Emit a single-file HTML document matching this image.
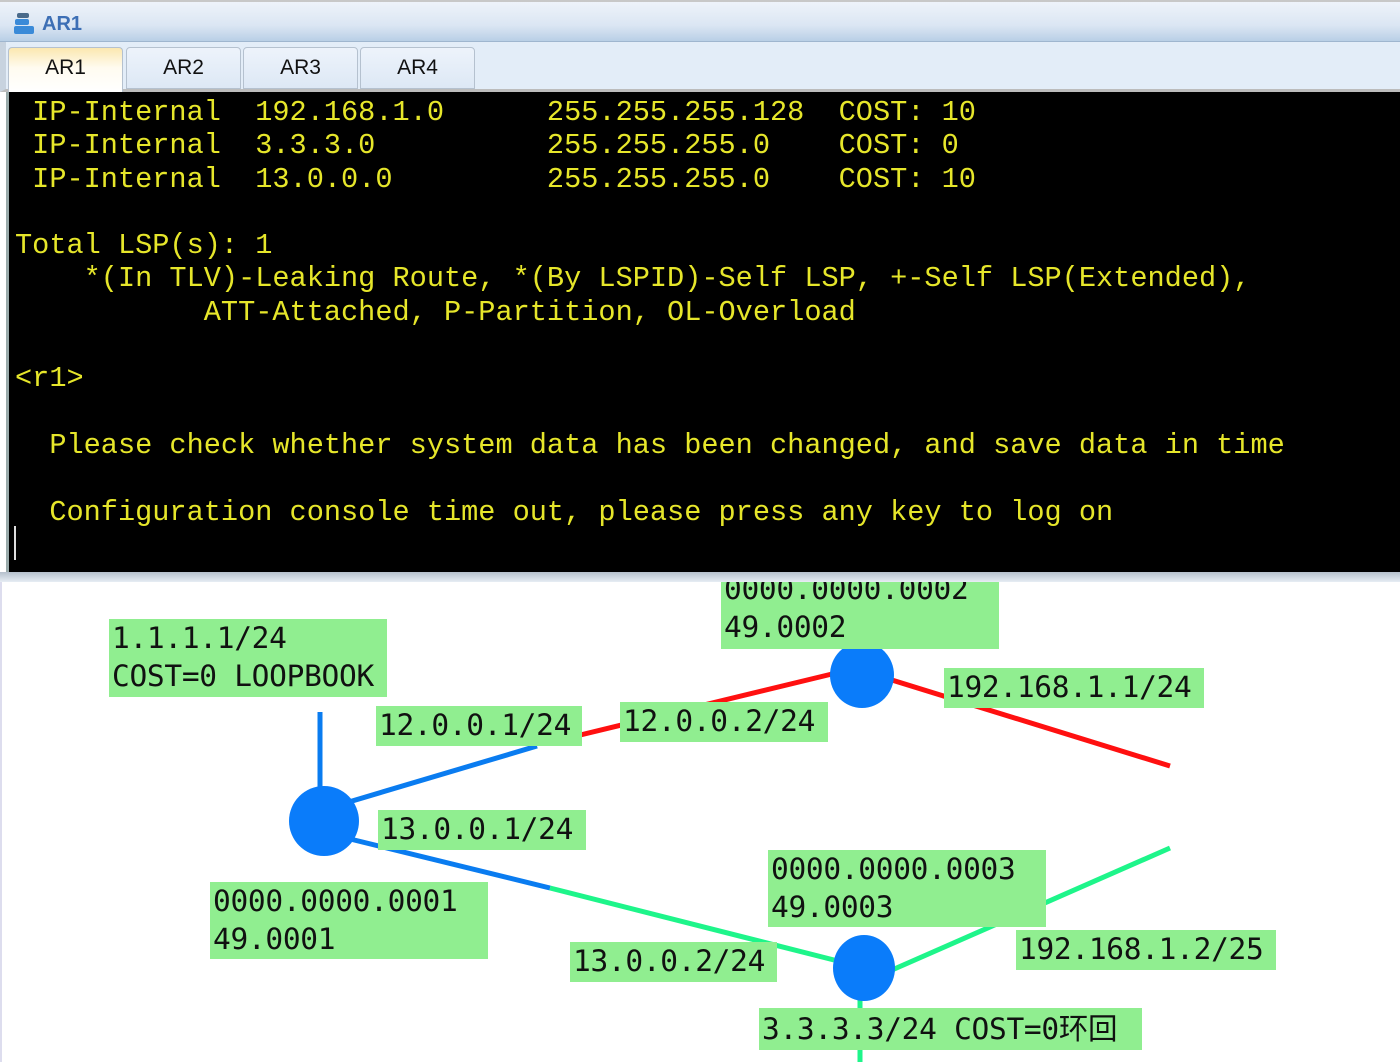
<!DOCTYPE html>
<html><head><meta charset="utf-8"><style>
*{margin:0;padding:0;box-sizing:border-box}
body{width:1400px;height:1062px;overflow:hidden;background:#fff;position:relative;font-family:"Liberation Sans",sans-serif}
#title{position:absolute;left:0;top:0;width:1400px;height:42px;border-top:2px solid #c8c8c8;background:linear-gradient(#eef3fa,#dbe6f3 60%,#b9cfe6);border-bottom:1px solid #9fb6cf}
#title span{position:absolute;left:42px;top:11px;font-size:20px;font-weight:bold;color:#3d6fb5}
#tabs{position:absolute;left:0;top:42px;width:1400px;height:50px;background:#e3edf8;border-left:6px solid #c8d3df;border-bottom:3px solid #bcbcbc}
.tab{position:absolute;top:5px;height:42px;width:115px;border:1px solid #b5c1cf;border-radius:4px 4px 0 0;background:linear-gradient(#edf3fb,#dde8f5);font-size:21px;text-align:center;line-height:40px;color:#111}
#term{position:absolute;left:6px;top:92px;width:1394px;height:482px;background:#000;border-left:3px solid #9aa;overflow:hidden}
#term pre{position:absolute;left:6px;top:4px;font-family:"Liberation Mono",monospace;font-size:28.6px;line-height:33.3px;color:#e6e62a}
#cursor{position:absolute;left:5px;top:434px;width:2px;height:34px;background:#ddd}
#band{position:absolute;left:0;top:572px;width:1400px;height:10px;background:linear-gradient(#b5c0cc,#e6edf4);}
#draw{position:absolute;left:0;top:582px;width:1400px;height:480px;overflow:hidden;border-left:2px solid #dde}
.l{position:absolute;background:#90ee90;font-family:"DejaVu Sans Mono","Noto Sans CJK SC",monospace;font-size:29.5px;line-height:38px;color:#111;padding:0 3px;white-space:pre;overflow:hidden;letter-spacing:-0.3px}
</style></head><body>
<div id="title"><svg style="position:absolute;left:12px;top:9px" width="26" height="26" viewBox="0 0 26 26"><rect x="5" y="2" width="12" height="5" rx="2" fill="#4a6a8a"/><rect x="3" y="8" width="14" height="6" rx="2" fill="#3a8ad8"/><rect x="2" y="15" width="20" height="8" rx="2" fill="#3a8ad8"/></svg><span>AR1</span></div>
<div id="tabs">
<div class="tab" style="left:2px;background:linear-gradient(#fbe7b0,#fffbf0 45%,#fff);border-bottom:none;height:45px">AR1</div>
<div class="tab" style="left:120px">AR2</div>
<div class="tab" style="left:237px">AR3</div>
<div class="tab" style="left:354px">AR4</div>
</div>
<div id="term"><pre> IP-Internal  192.168.1.0      255.255.255.128  COST: 10
 IP-Internal  3.3.3.0          255.255.255.0    COST: 0
 IP-Internal  13.0.0.0         255.255.255.0    COST: 10

Total LSP(s): 1
    *(In TLV)-Leaking Route, *(By LSPID)-Self LSP, +-Self LSP(Extended),
           ATT-Attached, P-Partition, OL-Overload

&lt;r1&gt;

  Please check whether system data has been changed, and save data in time

  Configuration console time out, please press any key to log on
</pre><div id="cursor"></div></div>
<div id="band"></div>
<div id="draw">
<svg width="1400" height="480" style="position:absolute;left:0;top:0">
<g stroke-width="5" fill="none">
<line x1="318" y1="130" x2="318" y2="210" stroke="#0a7cf0"/>
<line x1="330" y1="225" x2="535" y2="164" stroke="#0a7cf0"/>
<line x1="570" y1="155" x2="830" y2="92" stroke="#ff1010"/>
<line x1="880" y1="95" x2="1168" y2="184" stroke="#ff1010"/>
<line x1="340" y1="255" x2="548" y2="306" stroke="#0a7cf0"/>
<line x1="548" y1="306" x2="832" y2="378" stroke="#1ef58a"/>
<line x1="890" y1="388" x2="1168" y2="266" stroke="#1ef58a"/>
<line x1="858" y1="400" x2="858" y2="480" stroke="#1ef58a"/>
</g>
<ellipse cx="322" cy="239" rx="35" ry="35" fill="#0a7cfa"/>
<ellipse cx="860" cy="93" rx="32" ry="33" fill="#0a7cfa"/>
<ellipse cx="862" cy="386" rx="31" ry="33" fill="#0a7cfa"/>
</svg>
<div class="l" style="left:107px;top:37px;width:278px;height:78px">1.1.1.1/24
COST=0 LOOPBOOK</div>
<div class="l" style="left:374px;top:124px;width:206px;height:40px">12.0.0.1/24</div>
<div class="l" style="left:618px;top:120px;width:208px;height:40px">12.0.0.2/24</div>
<div class="l" style="left:719px;top:-12px;width:278px;height:79px">0000.0000.0002
49.0002</div>
<div class="l" style="left:942px;top:86px;width:260px;height:40px">192.168.1.1/24</div>
<div class="l" style="left:376px;top:228px;width:208px;height:40px">13.0.0.1/24</div>
<div class="l" style="left:208px;top:300px;width:278px;height:77px">0000.0000.0001
49.0001</div>
<div class="l" style="left:766px;top:268px;width:278px;height:77px">0000.0000.0003
49.0003</div>
<div class="l" style="left:568px;top:360px;width:207px;height:40px">13.0.0.2/24</div>
<div class="l" style="left:1014px;top:348px;width:260px;height:40px">192.168.1.2/25</div>
<div class="l" style="left:757px;top:426px;width:383px;height:42px;line-height:42px">3.3.3.3/24 COST=0环回</div>
</div>
</body></html>
